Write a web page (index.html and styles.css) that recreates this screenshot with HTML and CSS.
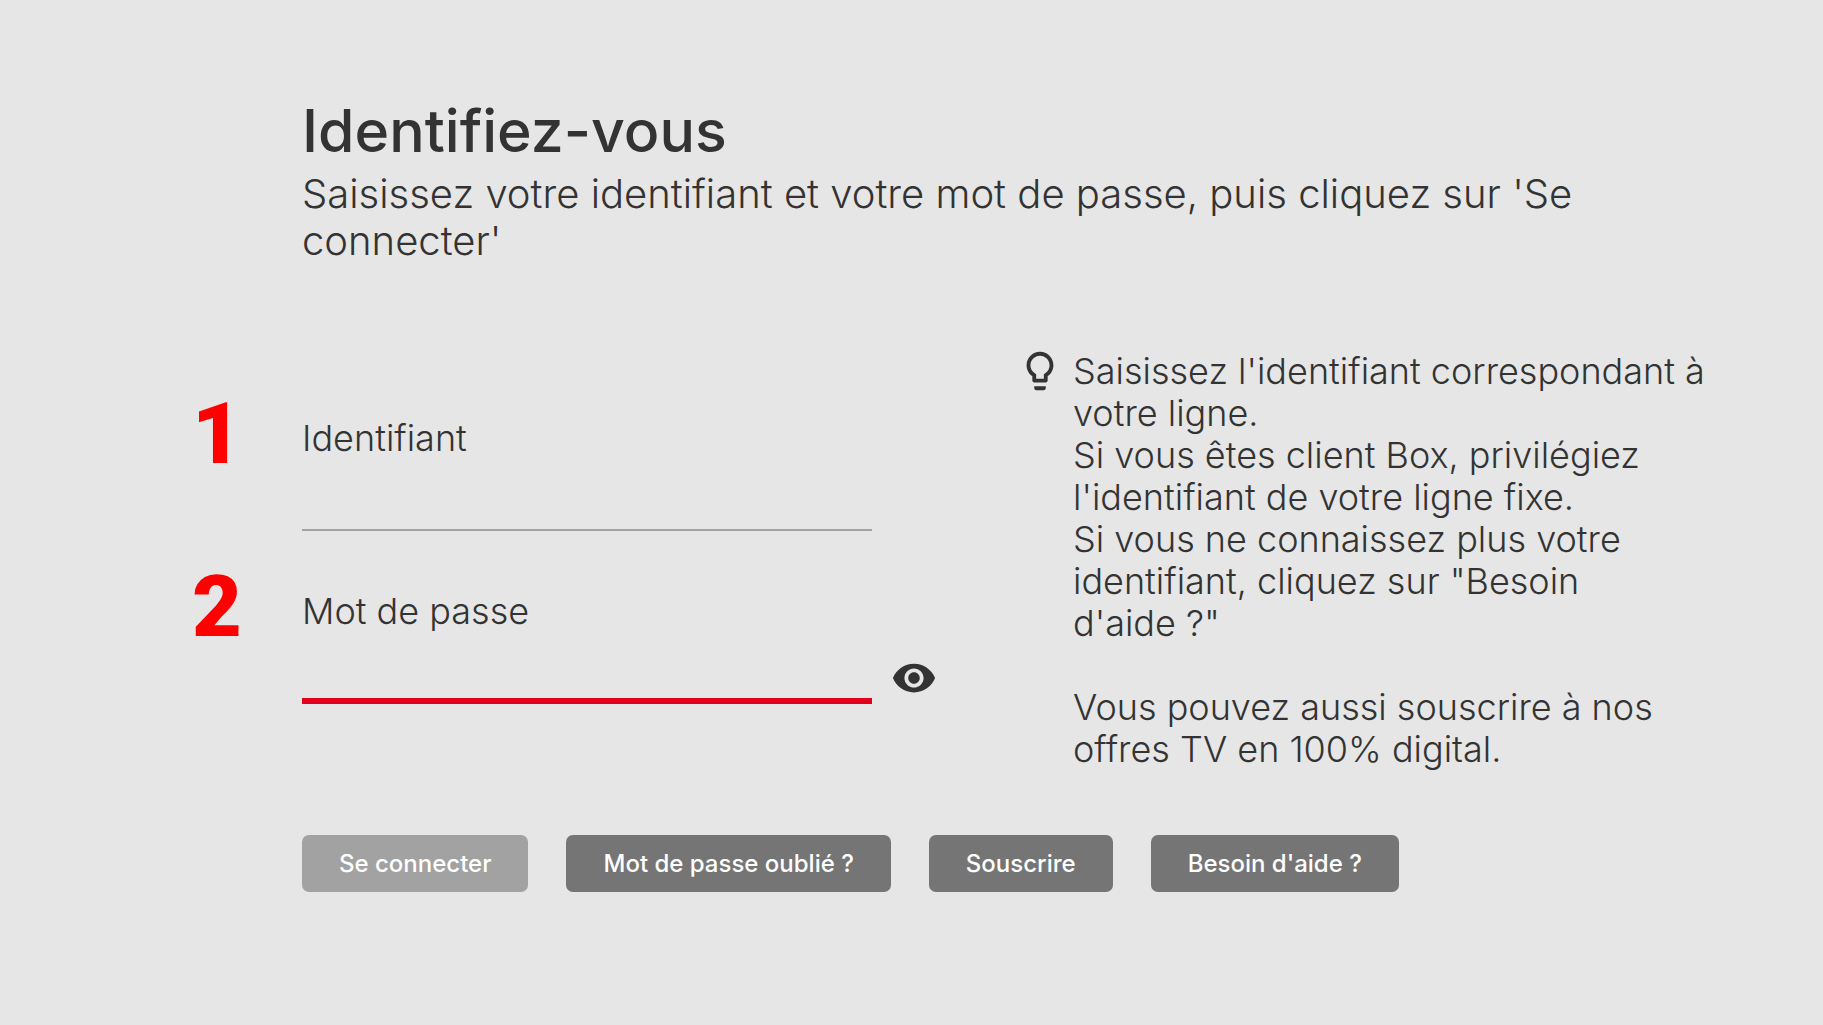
FILE: index.html
```html
<!DOCTYPE html>
<html lang="fr">
  <head>
    <meta charset="utf-8" />
    <meta name="viewport" content="width=device-width, initial-scale=1" />
    <title>Identifiez-vous</title>
    <link rel="stylesheet" href="styles.css">
  </head>
  <body>
    <main>
      <header>
        <h1>Identifiez-vous</h1>
        <p>
          Saisissez votre identifiant et votre mot de passe, puis cliquez sur 'Se
          connecter'
        </p>
      </header>
      <form>
        <div class="content">
          <div class="fields">
            <div class="field">
              <span class="step">1</span>
              <div class="entry">
                <label for="login">Identifiant</label>
                <input type="text" id="login" />
              </div>
            </div>
            <div class="field">
              <span class="step">2</span>
              <div class="entry">
                <label for="password">Mot de passe</label>
                <input type="password" id="password" class="active" />
              </div>
              <button type="button" class="reveal" aria-label="Afficher le mot de passe">
                <svg class="icon" viewBox="0 0 24 24">
                  <path d="M12 4.5C7 4.5 2.73 7.61 1 12c1.73 4.39 6 7.5 11 7.5s9.27-3.11 11-7.5c-1.73-4.39-6-7.5-11-7.5zM12 17c-2.76 0-5-2.24-5-5s2.24-5 5-5 5 2.24 5 5-2.24 5-5 5zm0-8c-1.66 0-3 1.34-3 3s1.34 3 3 3 3-1.34 3-3-1.34-3-3-3z" />
                </svg>
              </button>
            </div>
          </div>
          <aside class="hint">
            <svg class="icon" viewBox="0 0 24 24">
              <path d="M9 21c0 .55.45 1 1 1h4c.55 0 1-.45 1-1v-1H9v1zm3-19C8.14 2 5 5.14 5 9c0 2.38 1.19 4.47 3 5.74V17c0 .55.45 1 1 1h6c.55 0 1-.45 1-1v-2.26c1.81-1.27 3-3.36 3-5.74 0-3.86-3.14-7-7-7zm2.85 11.1l-.85.6V16h-4v-2.3l-.85-.6C7.8 12.16 7 10.63 7 9c0-2.76 2.24-5 5-5s5 2.24 5 5c0 1.63-.8 3.16-2.15 4.1z" />
            </svg>
            <div>
              <p>
                Saisissez l'identifiant correspondant à votre ligne.<br />
                Si vous êtes client Box, privilégiez l'identifiant de votre ligne
                fixe.<br />
                Si vous ne connaissez plus votre identifiant, cliquez sur "Besoin
                d'aide&nbsp;?"
              </p>
              <p>Vous pouvez aussi souscrire à nos offres TV en 100% digital.</p>
            </div>
          </aside>
        </div>
        <div class="actions">
          <button type="submit" disabled>Se connecter</button>
          <button type="button">Mot de passe oublié ?</button>
          <button type="button">Souscrire</button>
          <button type="button">Besoin d'aide ?</button>
        </div>
      </form>
    </main>
  </body>
</html>
```

FILE: styles.css
```css
* {
  box-sizing: border-box;
}
body {
  margin: 0;
  background-color: #e6e6e6;
  color: #333;
  font-family: Inter, "Liberation Sans", sans-serif;
  font-size: 36px;
  font-weight: 300;
  line-height: 42px;
}
main {
  padding: 95px 90px 40px 192px;
}
h1,
p {
  margin: 0;
}
header,
.actions {
  padding-left: 110px;
}
h1 {
  font-size: 59px;
  font-weight: 500;
  line-height: 72px;
}
header p {
  max-width: 1300px;
  margin-top: 3px;
  font-size: 40px;
  line-height: 47px;
}
.content {
  display: flex;
  justify-content: space-between;
  gap: 40px;
  margin-top: 84px;
}
.fields {
  padding-top: 43px;
}
.field {
  display: grid;
  grid-template-columns: 110px 570px 65px;
}
.field + .field {
  margin-top: 33px;
}
.step {
  padding-top: 12px;
  color: #f00;
  font-family: Roboto, "Liberation Sans", sans-serif;
  font-size: 86px;
  font-weight: 900;
  line-height: 62px;
}
.entry {
  display: flex;
  flex-direction: column;
  height: 140px;
  padding-top: 26px;
}
input {
  flex: 1;
  width: 100%;
  padding: 0;
  border: 0;
  border-bottom: 2px solid #a3a3a3;
  background: none;
  color: inherit;
  font: inherit;
}
input.active {
  border-bottom: 6px solid #e2001a;
}
.icon {
  display: block;
  width: 46px;
  height: 46px;
  fill: #333;
}
.reveal {
  align-self: end;
  justify-self: end;
  margin-bottom: 3px;
  padding: 0;
  border: 0;
  background: none;
}
.hint {
  display: flex;
  gap: 10px;
  width: 716px;
}
.hint .icon {
  flex: none;
}
.hint div {
  padding-top: 2px;
}
.hint p + p {
  margin-top: 42px;
}
.actions {
  display: flex;
  gap: 38px;
  margin-top: 65px;
}
.actions button {
  height: 57px;
  padding: 0 37px;
  border: 0;
  border-radius: 7px;
  background-color: #757575;
  color: #fff;
  font: 500 24px Inter, "Liberation Sans", sans-serif;
}
.actions button:disabled {
  background-color: #a2a2a2;
}
```
